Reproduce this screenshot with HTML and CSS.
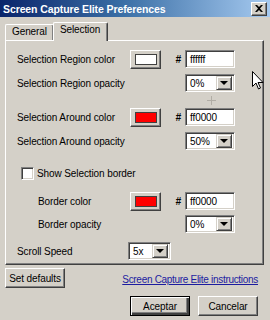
FILE: index.html
```html
<!DOCTYPE html>
<html lang="en">
<head>
  <meta charset="UTF-8">
  <title>Screen Capture Elite Preferences</title>
  <link rel="stylesheet" href="styles.css">
</head>
<body>
  <div class="window">
    <div class="titlebar">
      <span class="title">Screen Capture Elite Preferences</span>
      <span class="close">
        <svg width="8" height="7" viewBox="0 0 8 7"><path d="M0 0h2l2 2 2-2h2L5 3.5 8 7H6L4 5 2 7H0l3-3.5z" fill="#000"/></svg>
      </span>
    </div>

    <div class="tabs">
      <div class="tab">General</div>
      <div class="tab active">Selection</div>
    </div>

    <div class="panel">
      <div class="row">
        <span class="label">Selection Region color</span>
        <span class="color-btn"><span class="swatch"></span></span>
        <span class="hash">#</span>
        <span class="field">ffffff</span>
      </div>
      <div class="row near">
        <span class="label">Selection Region opacity</span>
        <span class="select offset"><span class="value">0%</span><span class="drop"></span></span>
      </div>

      <div class="row far">
        <span class="label">Selection Around color</span>
        <span class="color-btn"><span class="swatch red"></span></span>
        <span class="hash">#</span>
        <span class="field">ff0000</span>
      </div>
      <div class="row near">
        <span class="label">Selection Around opacity</span>
        <span class="select offset"><span class="value">50%</span><span class="drop"></span></span>
      </div>

      <div class="row mid check-row">
        <span class="checkbox"></span>
        <span>Show Selection border</span>
      </div>
      <div class="row sub">
        <span class="label indent">Border color</span>
        <span class="color-btn"><span class="swatch red"></span></span>
        <span class="hash">#</span>
        <span class="field">ff0000</span>
      </div>
      <div class="row tight">
        <span class="label indent">Border opacity</span>
        <span class="select offset"><span class="value">0%</span><span class="drop"></span></span>
      </div>

      <div class="row last">
        <span class="label short">Scroll Speed</span>
        <span class="select small"><span class="value">5x</span><span class="drop"></span></span>
      </div>
    </div>

    <div class="footer">
      <div class="btn defaults">Set defaults</div>
      <a class="link" href="#">Screen Capture Elite instructions</a>
    </div>
    <div class="actions">
      <div class="btn default">Aceptar</div>
      <div class="btn">Cancelar</div>
    </div>

    <span class="crosshair"></span>
    <svg class="cursor" width="12" height="20" viewBox="0 0 12 20">
      <path d="M0.5 0.5v15l3.5-3.5 2.5 6 2-1-2.5-5.5h5z" fill="#fff" stroke="#000" stroke-width="1"/>
    </svg>
  </div>
</body>
</html>
```

FILE: styles.css
```css
body {
  margin: 0;
  padding: 0;
  font-family: "Liberation Sans", Arial, sans-serif;
  font-size: 10px;
  letter-spacing: -0.1px;
  color: #000;
}

.window {
  position: relative;
  width: 270px;
  height: 320px;
  background-color: #d4d0c8;
  overflow: hidden;
  white-space: nowrap;
}

.titlebar {
  height: 17px;
  display: flex;
  align-items: center;
  justify-content: space-between;
  padding: 0 3px 0 3px;
  background: linear-gradient(to right, #0a246a, #3a6ea5 45%, #a6caf0);
}

.title {
  color: #fff;
  font-weight: bold;
  font-size: 10.5px;
}

.close {
  width: 14px;
  height: 12px;
  display: flex;
  align-items: center;
  justify-content: center;
  background-color: #d4d0c8;
  border: 1px solid;
  border-color: #fff #404040 #404040 #fff;
  box-shadow: inset -1px -1px #808080;
}

.tabs {
  display: flex;
  align-items: flex-end;
  height: 23px;
  padding-left: 5px;
}

.tab {
  height: 14px;
  padding: 1px 6px 0 6px;
  border: 1px solid;
  border-bottom: none;
  border-color: #fff #404040 #fff #fff;
  border-radius: 2px 2px 0 0;
  box-shadow: inset -1px 0 #808080;
}

.tab.active {
  position: relative;
  height: 17px;
  padding: 1px 7px 0 6px;
  margin-left: -1px;
  margin-bottom: -1px;
  background-color: #d4d0c8;
  z-index: 1;
}

.panel {
  margin-left: 5px;
  width: 259px;
  height: 225px;
  box-sizing: border-box;
  padding: 9px 0 0 11px;
  border: 1px solid;
  border-color: #fff #404040 #404040 #fff;
  box-shadow: inset -1px -1px #808080;
}

.row {
  display: flex;
  align-items: center;
  height: 18px;
}

.row.near {
  margin-top: 6px;
}

.row.far {
  margin-top: 16px;
}

.row.mid {
  margin-top: 14px;
}

.row.sub {
  margin-top: 10px;
}

.row.tight {
  margin-top: 5px;
}

.row.last {
  margin-top: 9px;
}

.label {
  width: 113px;
  box-sizing: border-box;
}

.label.indent {
  padding-left: 21px;
}

.label.short {
  width: 111px;
}

.color-btn {
  width: 31px;
  height: 19px;
  box-sizing: border-box;
  display: flex;
  align-items: center;
  justify-content: center;
  border: 1px solid;
  border-color: #fff #404040 #404040 #fff;
  box-shadow: inset -1px -1px #808080;
}

.swatch {
  width: 20px;
  height: 9px;
  background-color: #fff;
  border: 1px solid #404040;
}

.swatch.red {
  background-color: #ff0000;
}

.hash {
  width: 24px;
  padding-right: 4px;
  box-sizing: border-box;
  text-align: right;
  font-weight: bold;
  font-style: italic;
}

.field,
.select {
  width: 50px;
  height: 18px;
  box-sizing: border-box;
  display: flex;
  align-items: center;
  padding-left: 4px;
  background-color: #fff;
  border: 1px solid;
  border-color: #808080 #fff #fff #808080;
  box-shadow: inset 1px 1px #404040, inset -1px -1px #d4d0c8;
}

.select {
  justify-content: space-between;
  padding-right: 2px;
}

.select.offset {
  margin-left: 55px;
}

.select.small {
  width: 43px;
}

.drop {
  position: relative;
  width: 16px;
  height: 14px;
  box-sizing: border-box;
  background-color: #d4d0c8;
  border: 1px solid;
  border-color: #d4d0c8 #404040 #404040 #d4d0c8;
  box-shadow: inset 1px 1px #fff, inset -1px -1px #808080;
}

.drop::after {
  content: "";
  position: absolute;
  left: 3px;
  top: 4px;
  border-left: 4px solid transparent;
  border-right: 4px solid transparent;
  border-top: 4px solid #000;
}

.check-row {
  padding-left: 4px;
}

.checkbox {
  width: 13px;
  height: 13px;
  box-sizing: border-box;
  margin-right: 3px;
  background-color: #fff;
  border: 1px solid;
  border-color: #808080 #fff #fff #808080;
  box-shadow: inset 1px 1px #404040, inset -1px -1px #d4d0c8;
}

.footer {
  display: flex;
  align-items: flex-end;
  justify-content: space-between;
  padding: 3px 12px 0 5px;
}

.btn {
  width: 60px;
  height: 20px;
  box-sizing: border-box;
  display: flex;
  align-items: center;
  justify-content: center;
  border: 1px solid;
  border-color: #fff #404040 #404040 #fff;
  box-shadow: inset -1px -1px #808080;
}

.btn.default {
  border: 1px solid #000;
  box-shadow: inset 1px 1px #fff, inset -2px -2px #404040, inset -3px -3px #808080;
}

.link {
  color: #1c1ca0;
  text-decoration: underline;
  letter-spacing: -0.3px;
  margin-bottom: 3px;
}

.actions {
  display: flex;
  justify-content: flex-end;
  gap: 8px;
  padding: 8px 12px 0 0;
}

.crosshair {
  position: absolute;
  left: 207px;
  top: 96px;
  width: 9px;
  height: 9px;
  background:
    linear-gradient(#9a968e, #9a968e) 4px 0 / 1px 9px no-repeat,
    linear-gradient(#9a968e, #9a968e) 0 4px / 9px 1px no-repeat;
  opacity: 0.6;
}

.cursor {
  position: absolute;
  left: 252px;
  top: 71px;
}
```
